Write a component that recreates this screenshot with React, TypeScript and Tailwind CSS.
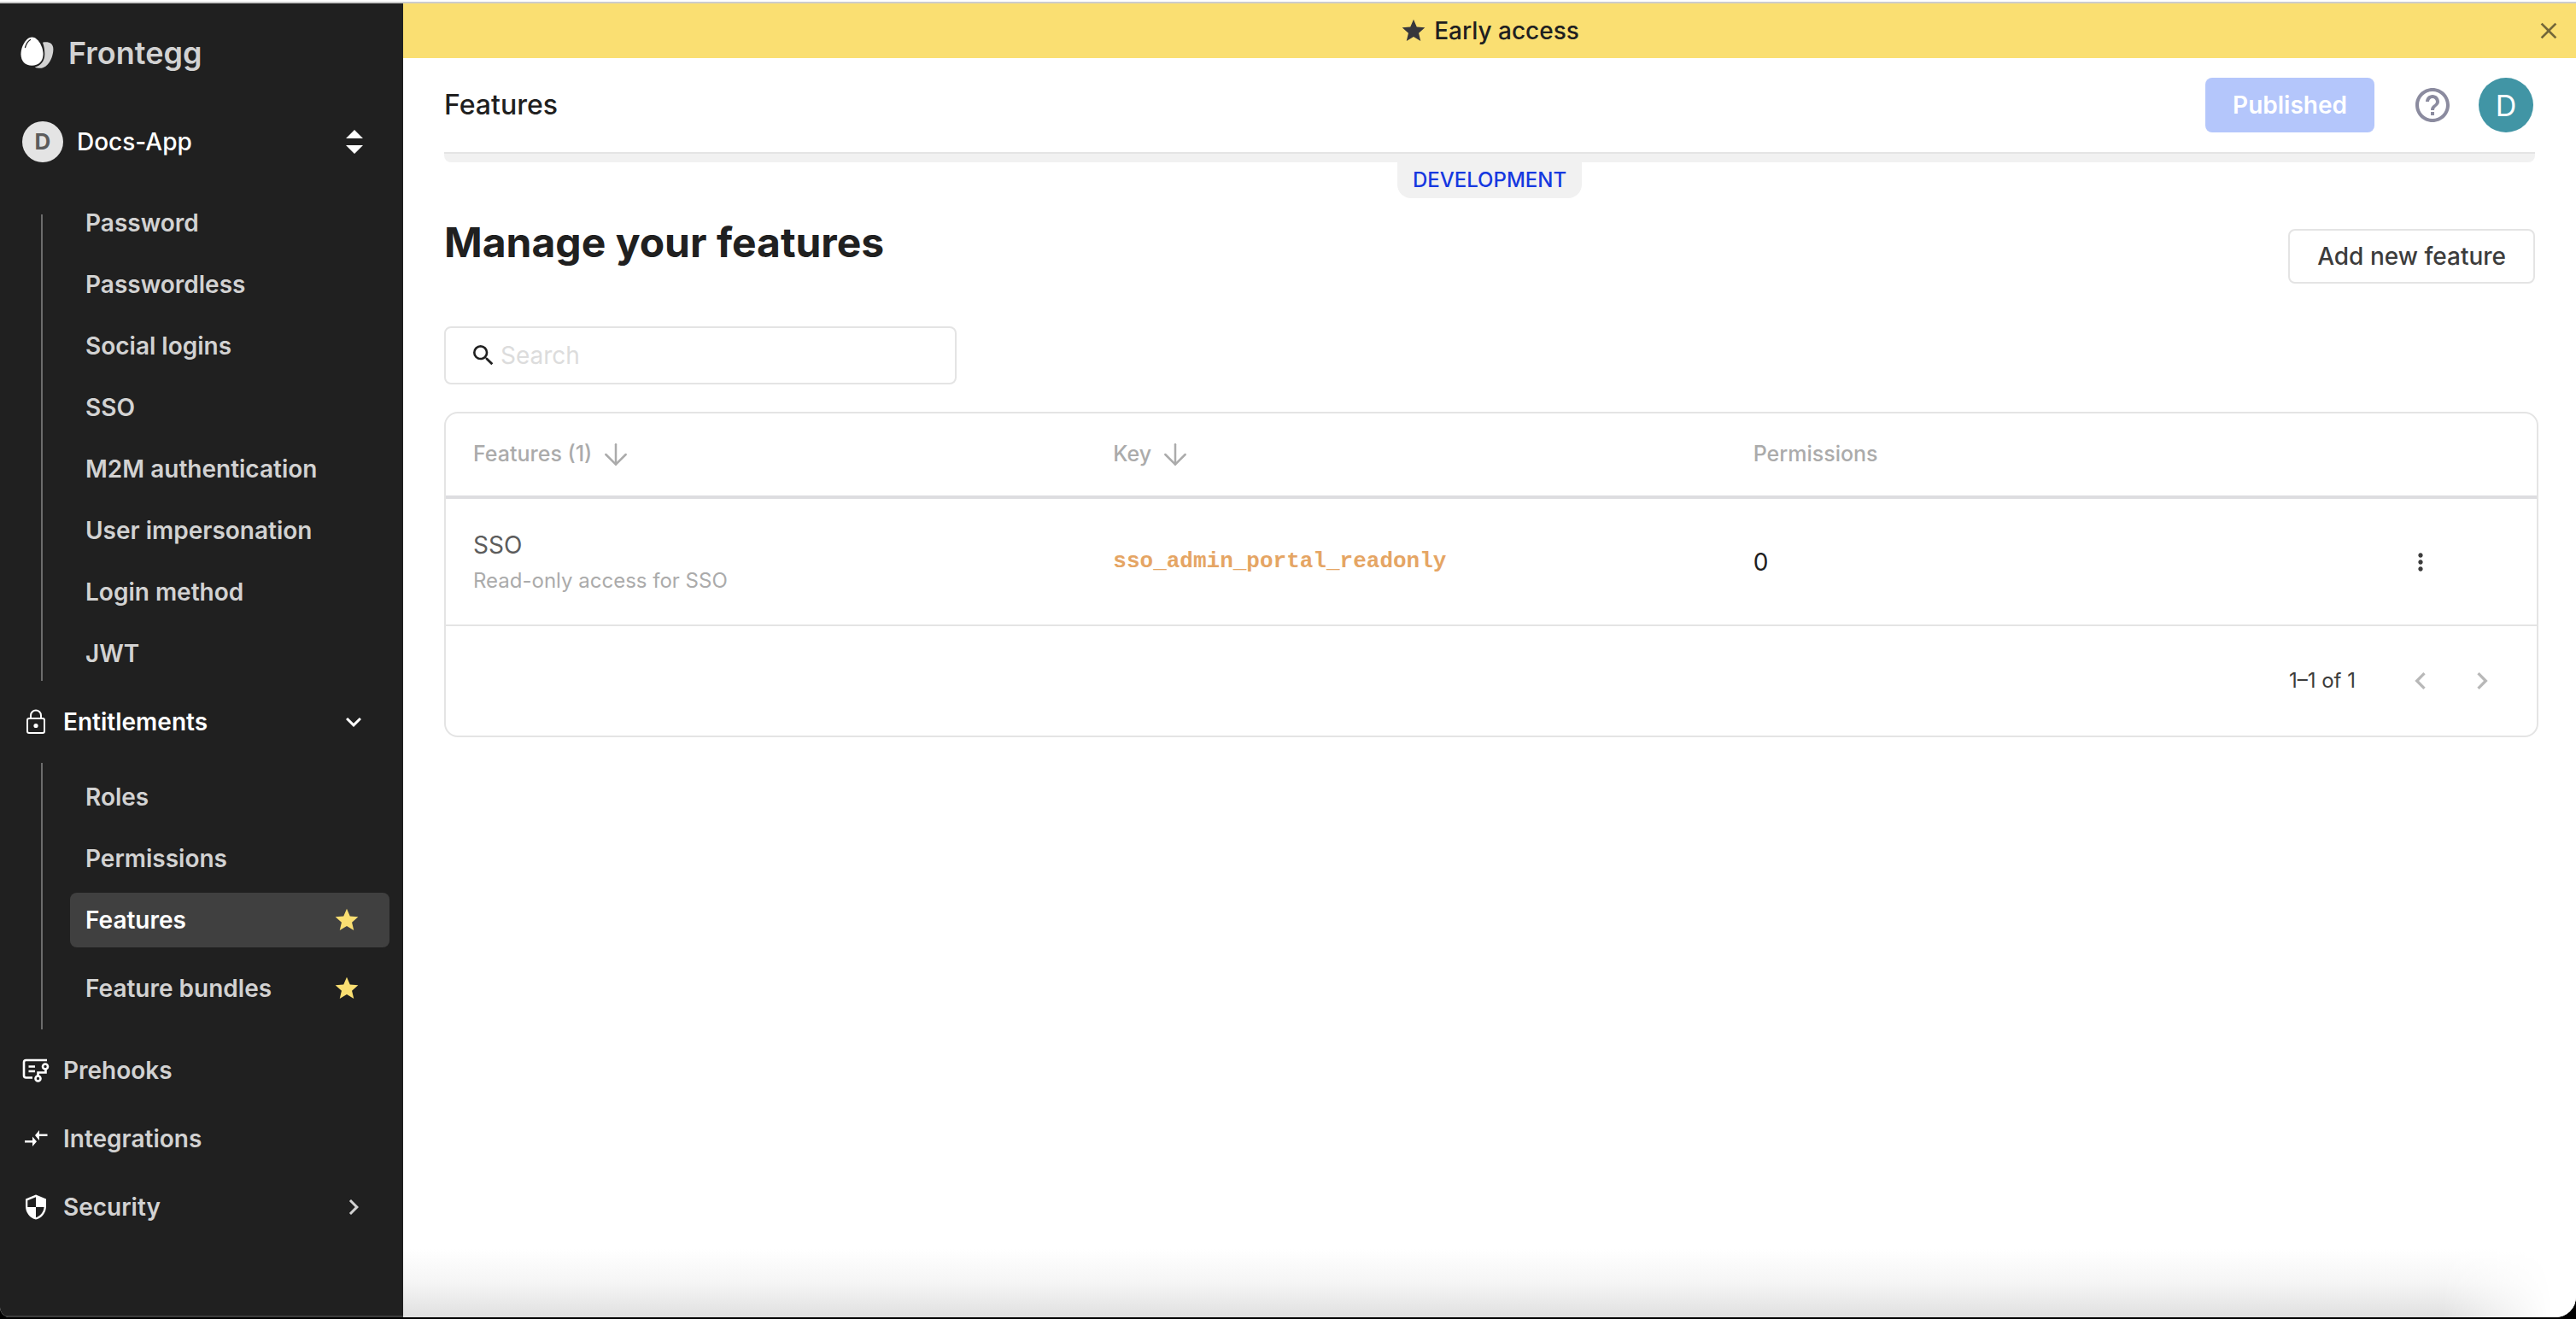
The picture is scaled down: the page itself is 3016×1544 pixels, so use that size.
import type { ReactNode } from "react";
import { ArrowDown } from "lucide-react";
import {
  MdChevronLeft,
  MdChevronRight,
  MdClose,
  MdExpandMore,
  MdHelpOutline,
  MdMoreVert,
  MdSearch,
  MdStar,
} from "react-icons/md";

const authItems = [
  "Password",
  "Passwordless",
  "Social logins",
  "SSO",
  "M2M authentication",
  "User impersonation",
  "Login method",
  "JWT",
];

function EggLogo() {
  return (
    <svg viewBox="0 0 40 38" className="h-[38px] w-10" aria-hidden="true">
      <path d="M26 6.800C32 5.400 38.400 7 38.400 14.500C38.400 24 32.500 36.800 23 36.800C20.500 36.800 18.300 36.400 16.800 35.400C23.500 34.300 28.300 28.500 28.300 20.500C28.300 15.500 27.600 11 26 6.800Z" fill="#d2d2d2" />
      <path d="M13.500 0.500C20.500 0.500 26.600 12 26.600 20.500C26.600 28.500 21 33.800 13.300 33.800C5.500 33.800 0.500 28.500 0.500 20.500C0.500 11.500 6.500 0.500 13.500 0.500Z" fill="#ffffff" />
      <path d="M5.500 12.500C6.500 8.800 8.500 5.500 11.500 3.500" fill="none" stroke="#202020" strokeWidth="1.300" strokeLinecap="round" />
    </svg>
  );
}

function LockIcon() {
  return (
    <svg viewBox="0 0 24 30" className="h-[30px] w-6" fill="none" stroke="currentColor" strokeWidth="2" aria-hidden="true">
      <rect x="2" y="11" width="20" height="17" rx="2" />
      <path d="M6 11V7.500a6 6 0 0 1 12 0V11" />
      <circle cx="12" cy="19.500" r="2.600" fill="currentColor" stroke="none" />
    </svg>
  );
}

function PrehookIcon() {
  return (
    <svg viewBox="0 0 32 28" className="h-7 w-8" fill="none" stroke="currentColor" strokeWidth="2.600" aria-hidden="true">
      <path d="M29 2H4.500A2.500 2.500 0 0 0 2 4.500V20A2.500 2.500 0 0 0 4.500 22.500H12" />
      <path d="M7.500 9.500H15M7.500 15H15" />
      <circle cx="27" cy="9.500" r="3" />
      <circle cx="18.500" cy="23.500" r="3" />
      <path d="M27.500 12.500V16.500H18.500V20.500" />
    </svg>
  );
}

function IntegrationIcon() {
  return (
    <svg viewBox="0 0 28 20" className="h-5 w-7" fill="currentColor" aria-hidden="true">
      <path d="M10 12H1V14.500H10V19L15 13.200L10 7.500ZM18 8V12L13 6L18 0V4.500H27.500V7H18Z" />
    </svg>
  );
}

function ShieldIcon() {
  return (
    <svg viewBox="0 0 24 30" className="h-[30px] w-6" aria-hidden="true">
      <path d="M12 0.500L24 5.500V14C24 21.500 19 28 12 29.500C5 28 0 21.500 0 14V5.500Z" fill="#fff" />
      <path d="M12 3.200V15H2.300V7.200ZM12 15H21.600C21.200 20.500 17.500 25.500 12 27.200Z" fill="#202020" />
    </svg>
  );
}

function NavLink({ icon, label, trailing }: { icon: ReactNode; label: string; trailing?: ReactNode }) {
  return (
    <a href="#" className="flex h-16 items-center pr-10 pl-6 text-[#d2d2d2]">
      <span className="flex w-9 justify-center text-white">{icon}</span>
      <span className="ml-[14px] flex-1">{label}</span>
      {trailing}
    </a>
  );
}

function SubLink({ label, starred, active }: { label: string; starred?: boolean; active?: boolean }) {
  return (
    <a
      href="#"
      aria-current={active ? "page" : undefined}
      className={
        active
          ? "flex h-16 items-center justify-between rounded-lg bg-[#404040] pr-[34px] pl-[18px] text-white"
          : "flex h-16 items-center justify-between rounded-lg pr-[34px] pl-[18px] text-[#d2d2d2]"
      }
    >
      {label}
      {starred && <MdStar className="size-8 text-[#fadf72]" />}
    </a>
  );
}

function Sidebar() {
  return (
    <aside className="flex w-[472px] shrink-0 flex-col border-b-2 border-[#3c3c3c] bg-[#202020] text-[28px] leading-8 font-semibold">
      <div className="flex h-[116px] items-center gap-4 pl-6 text-[36px] font-semibold text-[#d2d2d2]">
        <EggLogo />
        <span>Frontegg</span>
      </div>
      <button type="button" className="flex h-[92px] items-center pr-[46px] pl-[26px] text-left text-white">
        <span className="flex size-12 items-center justify-center rounded-full bg-[#e4e4e4] text-[26px] font-bold text-[#5c5c5c]">D</span>
        <span className="ml-4 flex-1 font-medium">Docs-App</span>
        <svg viewBox="0 0 22 30" className="h-[30px] w-[22px]" fill="#fff" aria-hidden="true">
          <path d="M11 1L21 11H1ZM11 29L1 19H21Z" />
        </svg>
      </button>
      <nav className="mt-[39px] flex flex-col gap-4">
        <ul className="ml-12 flex flex-col gap-2 border-l-2 border-[#6c6c6c] pr-4 pl-8">
          {authItems.map((label) => (
            <li key={label} className="first:-mt-[22px]">
              <SubLink label={label} />
            </li>
          ))}
        </ul>
        <a href="#" className="flex h-16 items-center pr-10 pl-6 text-white">
          <span className="flex w-9 justify-center">
            <LockIcon />
          </span>
          <span className="ml-[14px] flex-1">Entitlements</span>
          <MdExpandMore className="size-9" />
        </a>
        <ul className="ml-12 flex flex-col gap-2 border-l-2 border-[#6c6c6c] pt-2 pr-4 pb-4 pl-8">
          <li>
            <SubLink label="Roles" />
          </li>
          <li>
            <SubLink label="Permissions" />
          </li>
          <li>
            <SubLink label="Features" starred active />
          </li>
          <li className="pt-2">
            <SubLink label="Feature bundles" starred />
          </li>
        </ul>
        <NavLink icon={<PrehookIcon />} label="Prehooks" />
        <NavLink icon={<IntegrationIcon />} label="Integrations" />
        <NavLink icon={<ShieldIcon />} label="Security" trailing={<MdChevronRight className="size-9" />} />
      </nav>
    </aside>
  );
}

function FeatureTable() {
  return (
    <section className="mt-8 -mr-1 rounded-2xl border-2 border-[#e4e4e4]">
      <table className="w-full table-fixed text-left">
        <thead>
          <tr className="h-[98px] border-b-4 border-[#dddde0] text-[25px] text-[#ababab]">
            <th className="px-8 font-medium">
              <button type="button" className="flex items-center gap-2">
                Features (1)
                <ArrowDown className="size-10" strokeWidth={1.5} />
              </button>
            </th>
            <th className="px-8 font-medium">
              <button type="button" className="flex items-center gap-2">
                Key
                <ArrowDown className="size-10" strokeWidth={1.5} />
              </button>
            </th>
            <th className="px-8 font-medium">Permissions</th>
            <th className="w-[200px]" aria-label="Actions" />
          </tr>
        </thead>
        <tbody>
          <tr className="h-[150px] border-b-2 border-[#e4e4e4]">
            <td className="px-8">
              <div className="text-[28px] leading-[44px] text-[#5c5c5c]">SSO</div>
              <div className="text-[24px] leading-10 text-[#ababab]">Read-only access for SSO</div>
            </td>
            <td className="px-8 font-['Liberation_Mono',monospace] text-[26px] font-bold text-[#e5a564]">
              sso_admin_portal_readonly
            </td>
            <td className="px-8 text-[28px] text-[#202020]">0</td>
            <td className="px-8">
              <button type="button" aria-label="Feature actions" className="flex size-16 items-center justify-center text-[#3c3c3c]">
                <MdMoreVert className="size-8" />
              </button>
            </td>
          </tr>
        </tbody>
      </table>
      <div className="flex h-[128px] items-center justify-end pr-7 text-[24px] text-[#3c3c3c]">
        <span>1–1 of 1</span>
        <button type="button" disabled aria-label="Previous page" className="ml-10 flex size-[72px] items-center justify-center text-[#b8b8b8]">
          <MdChevronLeft className="size-10" />
        </button>
        <button type="button" disabled aria-label="Next page" className="flex size-[72px] items-center justify-center text-[#b8b8b8]">
          <MdChevronRight className="size-10" />
        </button>
      </div>
    </section>
  );
}

export default function App() {
  return (
    <div className="h-screen bg-black pb-0.5 font-['Inter',sans-serif]">
      <div className="flex h-full flex-col overflow-hidden rounded-br-3xl rounded-bl-xl bg-white pt-0.5">
        <div className="flex min-h-0 flex-1 border-t-2 border-[#cccccc]">
          <Sidebar />
          <div className="relative flex min-w-0 flex-1 flex-col bg-white">
            <div className="flex h-16 shrink-0 items-center bg-[#fadf72] pr-4 pl-12 text-[28px] font-medium text-[#202020]">
              <div className="flex flex-1 items-center justify-center gap-2">
                <MdStar className="size-8 text-[#37373c]" />
                Early access
              </div>
              <button type="button" aria-label="Dismiss" className="text-[#736739]">
                <MdClose className="size-8" />
              </button>
            </div>
            <header className="mx-12 flex h-28 shrink-0 items-center border-b-2 border-[#e4e4e4] pr-0.5">
              <h2 className="flex-1 text-[32px] font-medium text-[#202020]">Features</h2>
              <button type="button" disabled className="h-16 rounded-lg bg-[#b4c6fb] px-8 text-[28px] font-semibold text-white">
                Published
              </button>
              <button type="button" aria-label="Help" className="ml-11 text-[#8b8b9f]">
                <MdHelpOutline className="size-12" />
              </button>
              <button type="button" aria-label="Account" className="ml-[30px] size-16 rounded-full bg-[#4195a5] text-[34px] text-white">
                D
              </button>
            </header>
            <div className="mx-12 h-[10px] shrink-0 rounded-b-lg bg-[#f1f1f1]" />
            <div className="mx-auto flex h-[42px] shrink-0 items-center rounded-b-2xl bg-[#f1f1f1] px-[18px] text-[24px] font-medium text-[#1638e0]">
              DEVELOPMENT
            </div>
            <main className="mx-12">
              <div className="flex h-[100px] items-end justify-between">
                <h1 className="self-center pt-1 text-[48px] leading-[60px] font-bold text-[#202020]">Manage your features</h1>
                <button type="button" className="h-16 rounded-lg border-2 border-[#e4e4e4] px-8 text-[28px] font-medium text-[#3c3c3c]">
                  Add new feature
                </button>
              </div>
              <label className="mt-[50px] flex h-[68px] w-[600px] items-center gap-1 rounded-lg border-2 border-[#e4e4e4] px-7">
                <MdSearch className="size-8 text-[#202020]" />
                <input
                  type="search"
                  aria-label="Search"
                  placeholder="Search"
                  className="min-w-0 flex-1 text-[28px] outline-none placeholder:text-[#dcdcdc]"
                />
              </label>
              <FeatureTable />
            </main>
            <div className="pointer-events-none absolute inset-x-0 bottom-0 h-20 bg-linear-to-t from-[#e0e0e0] via-[#f5f5f5] to-white [mask-image:linear-gradient(to_left,transparent_28px,black_156px)]" />
          </div>
        </div>
      </div>
    </div>
  );
}
